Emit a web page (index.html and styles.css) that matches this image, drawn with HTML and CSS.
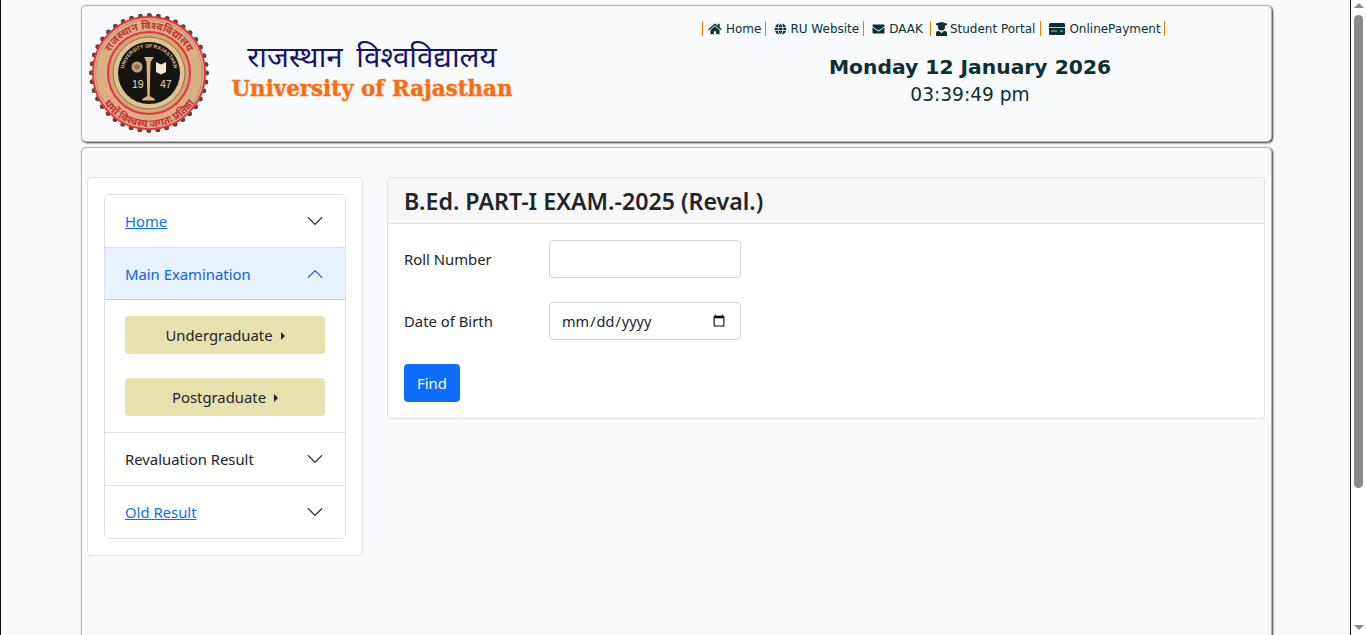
FILE: index.html
```html
<!DOCTYPE html>
<html lang="en">
<head>
<meta charset="utf-8">
<title>University of Rajasthan</title>
<link rel="stylesheet" href="styles.css">
</head>
<body>
<div class="window">
  <div class="page">
    <div class="container">
      <header class="panel top">
        <div class="brand">
          <svg class="seal" width="122" height="122" viewBox="0 0 122 122" role="img" aria-label="University of Rajasthan seal">
            <defs>
              <path id="ringTop" d="M17 60A44 44 0 0 1 105 60"/>
              <path id="ringBottom" d="M12.600 84A54 54 0 0 0 109.400 84"/>
              <path id="innerTop" d="M35.500 60A25.500 25.500 0 0 1 86.500 60"/>
            </defs>
            <circle cx="61" cy="60" r="57.500" fill="none" stroke="#5a4634" stroke-width="5" stroke-linecap="round" stroke-dasharray="0 9.030"/>
            <circle cx="61" cy="60" r="56" fill="#d9b48c" stroke="#ee3348" stroke-width="2"/>
            <circle cx="61" cy="60" r="53.500" fill="#d8b083" stroke="#c98a6a" stroke-width="1"/>
            <circle cx="61" cy="60" r="41" fill="#cfa877" stroke="#ea3047" stroke-width="2"/>
            <circle cx="61" cy="60" r="36" fill="#e0c193" stroke="#9a6a45" stroke-width="1"/>
            <circle cx="61" cy="60" r="31" fill="#141411"/>
            <text class="seal-hi"><textPath href="#ringTop" startOffset="50%">राजस्थान विश्वविद्यालय</textPath></text>
            <text class="seal-hi"><textPath href="#ringBottom" startOffset="50%">धर्मो विश्वस्य जगतः प्रतिष्ठा</textPath></text>
            <text class="seal-en"><textPath href="#innerTop" startOffset="50%">UNIVERSITY OF RAJASTHAN</textPath></text>
            <circle cx="49" cy="54" r="5.500" fill="#bfa273"/>
            <circle cx="49" cy="54" r="2.800" fill="#8d7350"/>
            <path d="M68 49l5 2.500 5-2.500v10l-5 2.500-5-2.500z" fill="#efe6cf"/>
            <path d="M56 44h10l-3.500 5-.8 34 5 3v1.500H54.300V86l5-3-.8-34z" fill="#d8b47c"/>
            <text class="seal-yr" x="44" y="75">19</text>
            <text class="seal-yr" x="72" y="75">47</text>
          </svg>
          <div class="names">
            <div class="hindi">राजस्थान विश्वविद्यालय</div>
            <div class="english">University of Rajasthan</div>
          </div>
        </div>
        <div class="info">
          <nav class="toplinks">
            <a class="tl tl-home"><svg class="ic ic-home" viewBox="0 0 576 512"><path d="M280 148 96 300v164c0 9 7 16 16 16l112-.3c9 0 16-7 16-16V368c0-9 7-16 16-16h64c9 0 16 7 16 16v95.600c0 9 7 16 16 16l112 .4c9 0 16-7 16-16V300L296 148c-5-4-11-4-16 0zM572 251l-84-69V44c0-7-5-12-12-12h-56c-7 0-12 5-12 12v72l-89-74c-18-14-44-14-61 0L4 251c-5 4-6 12-2 17l26 31c4 5 12 6 17 2L280 107c5-4 11-4 16 0l235 194c5 4 13 3 17-2l26-31c4-5 3-13-2-17z"/></svg>Home</a>
            <a class="tl tl-web"><svg class="ic ic-web" viewBox="0 0 512 512"><path d="M336 176c-7-47-26-80-80-144-54 64-73 97-80 144zM168 256c0 18 1 35 3 48h170c2-13 3-30 3-48s-1-35-3-48H171c-2 13-3 30-3 48zM487 176C462 96 396 36 312 22c27 38 48 95 56 154zM200 22C116 36 50 96 25 176h119c8-59 29-116 56-154zM495 208H376c2 16 3 32 3 48s-1 32-3 48h119c5-15 9-32 9-48s-4-33-9-48zM136 256c0-16 1-32 3-48H17c-5 15-9 32-9 48s4 33 9 48h122c-2-16-3-32-3-48zM176 336c7 47 26 80 80 144 54-64 73-97 80-144zM25 336c25 80 91 140 175 154-27-38-48-95-56-154zM487 336H368c-8 59-29 116-56 154 84-14 150-74 175-154z"/></svg>RU Website</a>
            <a class="tl tl-mail"><svg class="ic ic-mail" viewBox="0 0 512 512"><path d="M502 191c4-3 10 0 10 5v204c0 27-22 48-48 48H48c-27 0-48-21-48-48V196c0-5 6-8 10-5 22 17 52 39 154 113 21 15 57 48 92 48s72-33 92-48c102-74 132-96 154-113zM256 320c23 0 57-29 74-41 133-97 143-105 174-129 6-5 8-12 8-19v-19c0-27-21-48-48-48H48C21 64 0 85 0 112v19c0 7 3 14 8 19 31 24 41 32 174 129 17 12 51 41 74 41z"/></svg>DAAK</a>
            <a class="tl tl-student"><svg class="ic ic-student" viewBox="0 0 11 14"><path d="M0 1.500 5.500 0 11 1.500V3L9 3.500V5a3.500 3.500 0 0 1-7 0V3.500L0 3zM3 9l2.500 2L8 9h1a2 2 0 0 1 2 2v3H0v-3a2 2 0 0 1 2-2z"/></svg>Student Portal</a>
            <a class="tl tl-pay"><svg class="ic ic-pay" viewBox="0 0 16 12"><rect width="16" height="12" rx="1.500"/><path class="pay-line" d="M0 4.500h16M2 8h6M11 8h3"/></svg>OnlinePayment</a>
          </nav>
          <div class="date">Monday 12 January 2026</div>
          <div class="time">03:39:49 pm</div>
        </div>
      </header>
      <main class="panel body">
        <aside class="sidecard">
          <div class="accordion">
            <div class="acc-head">
              <a class="link">Home</a>
              <svg class="chev" viewBox="0 0 16 16"><path d="M1.600 4.600a.5.5 0 0 1 .8 0L8 10.300l5.600-5.700a.5.5 0 0 1 .8.800l-6 6a.5.5 0 0 1-.8 0l-6-6a.5.5 0 0 1 0-.8z"/></svg>
            </div>
            <div class="acc-head open">
              <span>Main Examination</span>
              <svg class="chev up" viewBox="0 0 16 16"><path d="M1.600 4.600a.5.5 0 0 1 .8 0L8 10.300l5.600-5.700a.5.5 0 0 1 .8.800l-6 6a.5.5 0 0 1-.8 0l-6-6a.5.5 0 0 1 0-.8z"/></svg>
            </div>
            <div class="acc-body">
              <button class="khaki">Undergraduate<span class="caret"></span></button>
              <button class="khaki">Postgraduate<span class="caret"></span></button>
            </div>
            <div class="acc-head bordered">
              <span class="plain">Revaluation Result</span>
              <svg class="chev" viewBox="0 0 16 16"><path d="M1.600 4.600a.5.5 0 0 1 .8 0L8 10.300l5.600-5.700a.5.5 0 0 1 .8.800l-6 6a.5.5 0 0 1-.8 0l-6-6a.5.5 0 0 1 0-.8z"/></svg>
            </div>
            <div class="acc-head bordered">
              <a class="link">Old Result</a>
              <svg class="chev" viewBox="0 0 16 16"><path d="M1.600 4.600a.5.5 0 0 1 .8 0L8 10.300l5.600-5.700a.5.5 0 0 1 .8.800l-6 6a.5.5 0 0 1-.8 0l-6-6a.5.5 0 0 1 0-.8z"/></svg>
            </div>
          </div>
        </aside>
        <section class="formcard">
          <h1 class="formhead">B.Ed. PART-I EXAM.-2025 (Reval.)</h1>
          <form class="formbody">
            <div class="row"><label class="lab">Roll Number</label><input class="field" type="text"></div>
            <div class="row"><label class="lab">Date of Birth</label><input class="field field-date" type="date"></div>
            <button class="find" type="button">Find</button>
          </form>
        </section>
      </main>
    </div>
  </div>
  <div class="scrollbar">
    <div class="sb-up"></div>
    <div class="sb-thumb"></div>
    <div class="sb-down"></div>
  </div>
</div>
</body>
</html>
```
FILE: styles.css
```css
* { box-sizing: border-box; }
html, body { margin: 0; height: 100%; overflow: hidden; }
body { font-family: "Noto Sans", "Open Sans", sans-serif; font-size: 14.85px; color: #212529; background: #fff; }
.window { display: flex; height: 635px; width: 1366px; }
.page { width: 1351px; height: 635px; overflow: hidden; background: #f9fafc; border-left: 1px solid #111; border-right: 1px solid #111; }
.scrollbar { width: 15px; background: #fff; display: flex; flex-direction: column; align-items: center; }
.sb-up { width: 0; height: 0; margin-top: 3px; border-left: 5px solid transparent; border-right: 5px solid transparent; border-bottom: 5px solid #8a8a8a; }
.sb-thumb { width: 9px; height: 473px; margin-top: 7px; border-radius: 5px; background: #8a8a8a; }
.sb-down { width: 0; height: 0; margin-top: auto; margin-bottom: 5px; border-left: 5px solid transparent; border-right: 5px solid transparent; border-top: 5px solid #8a8a8a; }
.container { width: 1191px; margin-left: 80px; padding-top: 5px; }
.panel { border: 1px solid #adb5bd; border-radius: 5px; box-shadow: 1px 1px 2px #333; background: #f9fafc; }
.top { height: 137px; display: flex; }
.brand { flex: none; width: 615px; display: flex; padding: 7px 0 0 6px; }
.seal { flex: none; }
.seal-hi { font: 700 10.500px "Noto Sans", sans-serif; fill: #c9303a; text-anchor: middle; }
.seal-en { font: 700 5px "Liberation Sans", sans-serif; fill: #e2c48f; text-anchor: middle; }
.seal-yr { font: 10.500px "Liberation Sans", sans-serif; fill: #e8dcc0; }
.names { width: 300px; margin-left: 12px; text-align: center; }
.hindi { font-family: "Noto Sans", sans-serif; font-size: 29.5px; line-height: 32px; margin-top: 27px; word-spacing: 6px; white-space: nowrap; color: #14146b; }
.english { font-family: "DejaVu Serif", serif; font-weight: 700; font-size: 21.4px; line-height: 28px; margin-top: 3px; color: #ff6a0d; -webkit-text-stroke: .4px #ff6a0d; white-space: nowrap; }
.info { flex: 1; color: #0c3030; font-family: "DejaVu Sans", sans-serif; text-align: center; }
.toplinks { display: flex; margin: 15px 0 0 5px; height: 15px; align-items: center; font-size: 12px; }
.tl { display: flex; align-items: center; white-space: nowrap; height: 15px; border-left: 1px solid #f47c00; }
.tl-home { padding: 0 4px 0 5px; }
.tl-web { padding: 0 4px 0 8px; }
.tl-mail { padding: 0 7px 0 8px; }
.tl-student { padding: 0 5px 0 5px; }
.tl-pay { padding: 0 3px 0 8px; border-right: 1px solid #f47c00; }
.ic { height: 12px; fill: #0c3030; flex: none; }
.ic-home { width: 14px; margin-right: 4px; }
.ic-web { width: 13px; margin-right: 3px; }
.ic-mail { width: 13px; margin-right: 4px; }
.ic-student { width: 11px; height: 14px; margin-right: 3px; }
.ic-pay { width: 16px; margin-right: 4px; }
.pay-line { fill: none; stroke: #f9fafc; stroke-width: 1; opacity: .75; }
.date { font-weight: 700; font-size: 20.3px; line-height: 26px; margin-top: 18px; padding-right: 28px; white-space: nowrap; }
.time { font-size: 18.6px; line-height: 24px; margin-top: 3px; padding-right: 28px; }
.body { height: 600px; margin-top: 5px; padding: 29px 6px 0 5px; display: flex; align-items: flex-start; gap: 24px; }
.sidecard { width: 276px; padding: 16px; background: #fff; border: 1px solid #dee2e6; border-radius: 4px; }
.accordion { border: 1px solid #dee2e6; border-radius: 5px; overflow: hidden; }
.acc-head { height: 52px; padding: 0 21px 0 20px; display: flex; justify-content: space-between; align-items: center; background: #fff; }
.acc-head.open { height: 53px; color: #0c63e4; background: #e7f1ff; border-top: 1px solid #dee2e6; box-shadow: inset 0 -1px 0 rgba(0,0,0,.125); }
.acc-head.bordered { height: 53px; border-top: 1px solid #dee2e6; }
.link { color: #0d6efd; text-decoration: underline; }
.plain { color: #212529; }
.chev { width: 18px; height: 18px; fill: #212529; }
.chev.up { fill: #0c63e4; transform: rotate(180deg); }
.acc-body { padding: 16px 20px; display: flex; flex-direction: column; gap: 24px; }
.khaki { height: 38px; border: 0; border-radius: 4px; background: #e6e2b0; color: #212529; font: inherit; display: flex; align-items: center; justify-content: center; }
.caret { width: 0; height: 0; margin-left: 8px; margin-top: 2px; border-top: 4px solid transparent; border-bottom: 4px solid transparent; border-left: 4px solid #212529; }
.formcard { flex: 1; background: #fff; border: 1px solid #dee2e6; border-radius: 4px; }
.formhead { margin: 0; height: 46px; padding: 0 16px; background: #f7f7f7; border-bottom: 1px solid #dee2e6; font-size: 23.2px; font-weight: 600; line-height: 47px; color: #212529; white-space: nowrap; }
.formbody { padding: 16px; height: 194px; }
.row { display: flex; align-items: center; margin-bottom: 24px; }
.lab { width: 145px; flex: none; }
.field { width: 192px; height: 38px; padding: 6px 12px; border: 1px solid #ced4da; border-radius: 4px; background: #fff; color: #212529; font: inherit; }
.field-date { padding-left: 11px; font-size: 14.5px; }
.find { display: block; width: 56px; height: 38px; border: 0; border-radius: 4px; background: #0d6efd; color: #fff; font: inherit; }
```
